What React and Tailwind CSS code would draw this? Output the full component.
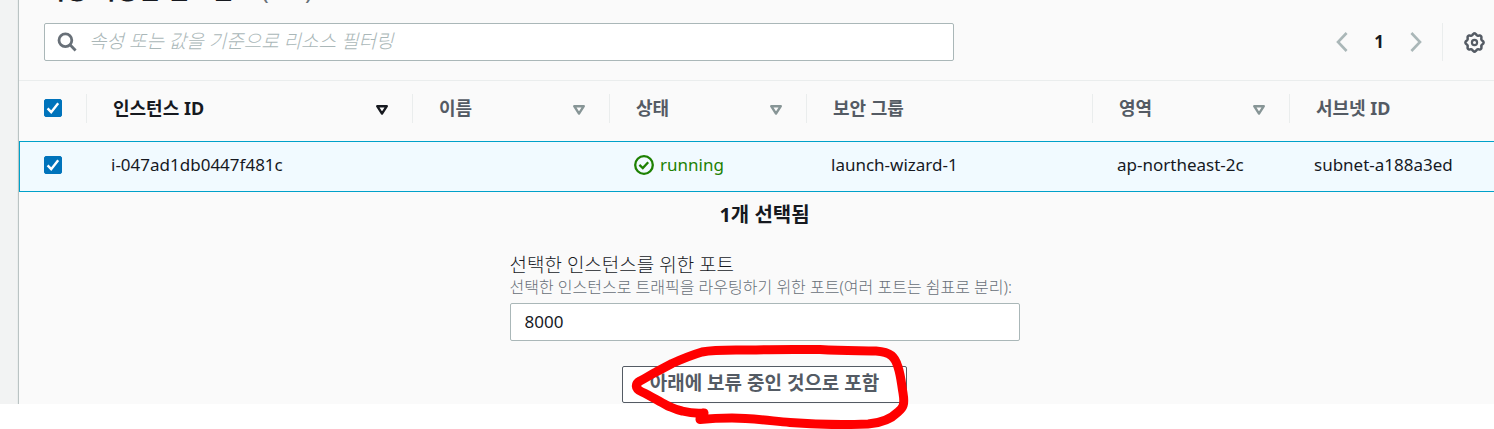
import React, { useState } from "react";

const columns = [
  { label: "인스턴스 ID", sortable: true, active: true },
  { label: "이름", sortable: true },
  { label: "상태", sortable: true },
  { label: "보안 그룹" },
  { label: "영역", sortable: true },
  { label: "서브넷 ID", last: true },
];

function Checkbox({ label }) {
  return (
    <span className="grid size-[18px]">
      <input
        type="checkbox"
        aria-label={label}
        defaultChecked
        className="peer col-start-1 row-start-1 size-[18px] appearance-none rounded-xs border border-[#879596] bg-white checked:border-[#0073bb] checked:bg-[#0073bb]"
      />
      <svg
        viewBox="0 0 18 18"
        className="pointer-events-none invisible col-start-1 row-start-1 size-[18px] peer-checked:visible"
        fill="none"
        stroke="#fff"
        strokeWidth="2.4"
      >
        <path d="M3.6 9.4 7.2 13.2 14.2 4.2" />
      </svg>
    </span>
  );
}

function SortIcon({ active }) {
  return (
    <svg
      viewBox="0 0 14 12"
      className={active ? "h-3 w-3.5 text-[#16191f]" : "h-3 w-3.5 text-[#879596]"}
      fill="none"
      stroke="currentColor"
      strokeWidth="2.4"
      strokeLinejoin="round"
    >
      <path d="M2.2 2.2h9.6L7 9.6z" />
    </svg>
  );
}

function Chevron({ d }) {
  return (
    <svg viewBox="0 0 12 20" className="h-5 w-3" fill="none" stroke="#aab7b8" strokeWidth="2.6">
      <path d={d} />
    </svg>
  );
}

function GearIcon() {
  const points = Array.from({ length: 96 }, (_, i) => {
    const a = (i / 96) * Math.PI * 2;
    const r = 8.3 + 0.8 * Math.cos(a * 8);
    return `${(10.5 + r * Math.sin(a)).toFixed(2)},${(10.5 - r * Math.cos(a)).toFixed(2)}`;
  }).join(" ");
  return (
    <svg viewBox="0 0 21 21" className="size-[21px]" fill="none" stroke="#545b64" strokeWidth="2.5">
      <polygon points={points} />
      <circle cx="10.5" cy="10.5" r="2.6" strokeWidth="2.2" />
    </svg>
  );
}

function StatusRunning() {
  return (
    <span className="flex items-center gap-1.5 text-[#1d8102]">
      <svg viewBox="0 0 20 20" className="size-5" fill="none" stroke="currentColor" strokeWidth="2.3">
        <circle cx="10" cy="10" r="8.8" />
        <path d="M5.4 9.8 8.8 13 14.2 7.2" />
      </svg>
      running
    </span>
  );
}

function headerCell({ last, sortable }) {
  if (last) return "flex h-[29px] items-center pl-[26px]";
  if (!sortable) return "flex h-[29px] items-center border-r border-[#eaeded] pl-[26px]";
  return "flex h-[29px] items-center justify-between border-r border-[#eaeded] pr-[23px] pl-[26px]";
}

export default function App() {
  const [ports, setPorts] = useState("8000");
  const [query, setQuery] = useState("");

  return (
    <div className="min-h-screen bg-white font-['Noto_Sans','Noto_Sans_CJK_KR',sans-serif] text-[#16191f]">
      <div className="flex bg-[#f2f3f3]">
        <div className="w-[18px] shrink-0 border-r border-[#eaeded]" />
        <main className="min-w-0 flex-1 border-l border-[#bac3c3] bg-[#fafafa] pb-px">
          <header className="flex h-[23px] items-start pl-[25px]">
            <h2 className="-mt-[26px] text-[24px] leading-8 font-bold whitespace-nowrap">
              사용 가능한 인스턴스 <span className="font-normal text-[#687078]">(1/1)</span>
            </h2>
          </header>

          <div className="flex items-center justify-between pl-[25px]">
            <div className="flex h-[38px] w-full max-w-[910px] items-center gap-3 rounded-xs border border-[#aab7b8] bg-white px-3">
              <svg viewBox="0 0 20 20" className="size-5 shrink-0" fill="none" stroke="#687078" strokeWidth="2.8">
                <circle cx="8.4" cy="8.2" r="6.4" />
                <path d="M13 12.8 18.6 18.4" />
              </svg>
              <input
                type="search"
                aria-label="리소스 필터링"
                value={query}
                onChange={(e) => setQuery(e.target.value)}
                placeholder="속성 또는 값을 기준으로 리소스 필터링"
                className="h-9 min-w-0 flex-1 bg-transparent pb-0.5 text-[19px] font-light outline-none placeholder:text-[#aab7b8] placeholder:italic"
              />
            </div>
            <nav className="flex shrink-0 items-center pr-[9px]" aria-label="페이지">
              <button type="button" aria-label="이전">
                <Chevron d="M10.6 1 2 10l8.6 9" />
              </button>
              <button type="button" className="w-[62px] text-[17px] font-bold">1</button>
              <button type="button" aria-label="다음">
                <Chevron d="M1.4 1 10 10l-8.6 9" />
              </button>
              <span className="ml-5 h-[38px] border-l border-[#eaeded]" />
              <button type="button" aria-label="설정" className="ml-[21px]">
                <GearIcon />
              </button>
            </nav>
          </div>

          <table className="mt-[19px] w-full table-fixed border-separate border-spacing-0 border-t border-[#eaeded] text-left">
            <colgroup>
              <col className="w-[68px]" />
              <col className="w-[326px]" />
              <col className="w-[197px]" />
              <col className="w-[197px]" />
              <col className="w-[286px]" />
              <col className="w-[197px]" />
              <col />
            </colgroup>
            <thead>
              <tr className="h-[60px] text-[18px] text-[#545b64]">
                <th className="p-0 pb-1.5">
                  <div className="flex h-[29px] items-center border-r border-[#eaeded] pl-[25px]">
                    <Checkbox label="모두 선택" />
                  </div>
                </th>
                {columns.map((c) => (
                  <th key={c.label} className="p-0 pb-1.5 font-bold whitespace-nowrap">
                    <div className={headerCell(c)}>
                      <span className={c.active ? "text-[#16191f]" : ""}>{c.label}</span>
                      {c.sortable && (
                        <button type="button" aria-label={`${c.label} 정렬`} className="pt-1">
                          <SortIcon active={c.active} />
                        </button>
                      )}
                    </div>
                  </th>
                ))}
              </tr>
            </thead>
            <tbody>
              <tr className="h-[51px] text-[17px] whitespace-nowrap [&>td]:border-y [&>td]:border-[#00a1c9] [&>td]:bg-[#f1faff] [&>td]:p-0 [&>td]:pb-1 [&>td]:pl-6">
                <td className="border-l">
                  <Checkbox label="i-047ad1db0447f481c 선택" />
                </td>
                <td>i-047ad1db0447f481c</td>
                <td />
                <td>
                  <StatusRunning />
                </td>
                <td>launch-wizard-1</td>
                <td>ap-northeast-2c</td>
                <td>subnet-a188a3ed</td>
              </tr>
            </tbody>
          </table>

          <div className="flex justify-center pt-[9px] pl-4">
            <section className="flex w-[510px] flex-col">
              <h3 className="text-center text-[20px] leading-7 font-bold">1개 선택됨</h3>
              <label htmlFor="ports" className="mt-[22px] text-[19px] leading-7 font-light">
                선택한 인스턴스를 위한 포트
              </label>
              <p id="ports-hint" className="text-[16px] leading-4 font-light whitespace-nowrap text-[#687078]">
                선택한 인스턴스로 트래픽을 라우팅하기 위한 포트(여러 포트는 쉼표로 분리):
              </p>
              <input
                id="ports"
                aria-describedby="ports-hint"
                value={ports}
                onChange={(e) => setPorts(e.target.value)}
                className="mt-2 h-[38px] rounded-xs border border-[#aab7b8] bg-white px-3.5 pb-0.5 text-[17px] outline-none"
              />
              <div className="relative mt-[25px] self-center">
                <button
                  type="button"
                  className="h-[37px] rounded-xs border border-[#545b64] bg-white px-[27px] pb-1 text-[19px] leading-7 font-bold whitespace-nowrap text-[#545b64]"
                >
                  아래에 보류 중인 것으로 포함
                </button>
                <svg
                  viewBox="0 0 330 94"
                  className="pointer-events-none absolute -top-[31px] -left-[22px] h-[94px] w-[330px]"
                  fill="none"
                  stroke="#f00"
                  strokeWidth="9"
                  strokeLinecap="round"
                  strokeLinejoin="round"
                >
                  <path d="M100 84.500L100.500 78.500L104 78C94 79 88 77.500 82 76C76 75 72 72.500 67 70.500C58 66 51 61 42 57C34 53.500 35.500 48.500 40 46C46 43 50 40 56 37L72 28.500C82 24 92 20 102 17C118 14 140 15.500 156 15C182 14 200 14.500 220 14.500C244 16 258 15.500 276 16C291 17 295 22 298 32C301 41 301.500 50 303 58C305 70 303 73 298 77C291 84 282 88 268 89C245 90 215 89.500 190 87.500C168 85.500 150 83 132 83C118 83 110 83.500 100 84.500" />
                </svg>
              </div>
            </section>
          </div>
        </main>
      </div>
    </div>
  );
}
